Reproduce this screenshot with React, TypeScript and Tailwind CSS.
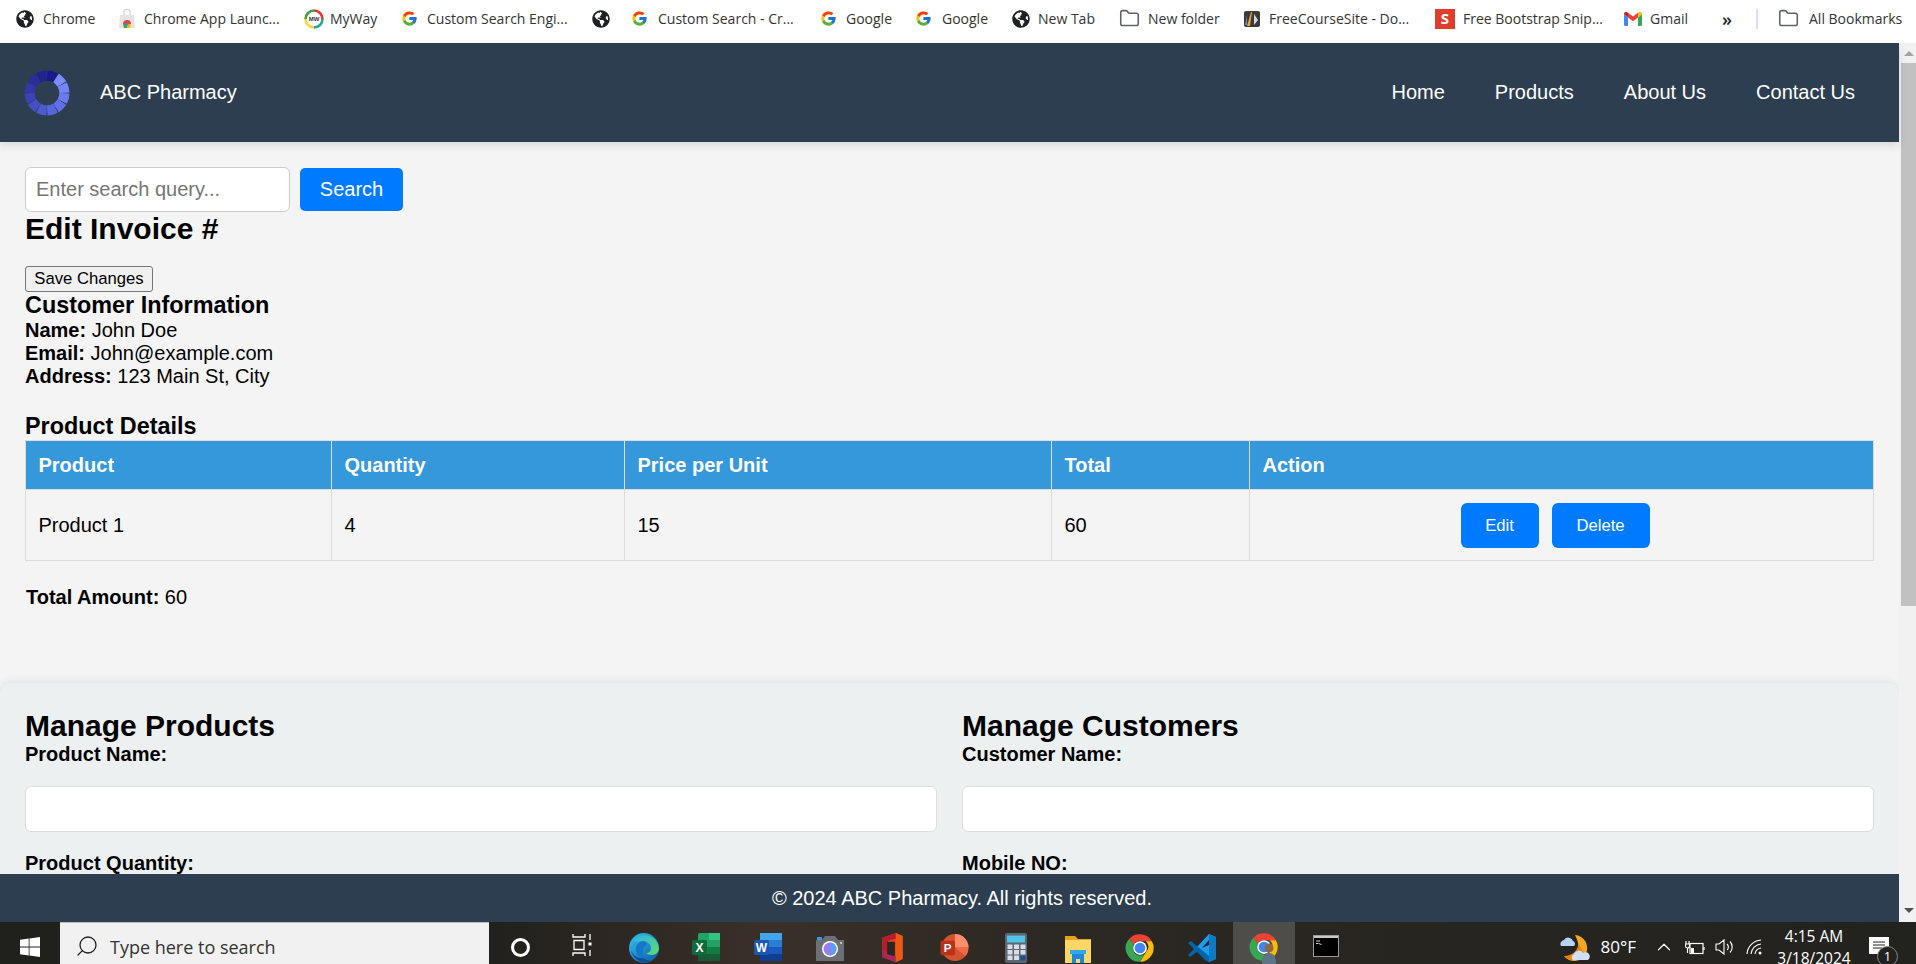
import { ChevronUp, Folder, Search } from "lucide-react";
import { FaGlobeAmericas } from "react-icons/fa";
import { FcGoogle } from "react-icons/fc";

function Globe() {
  return <FaGlobeAmericas size={18} className="text-[#202124] shrink-0" />;
}

function Google() {
  return <FcGoogle size={17} className="shrink-0" />;
}

function FolderIcon() {
  return <Folder size={21} strokeWidth={1.8} className="text-[#5f6368] shrink-0" />;
}

function ChromeLogo({ size = 30 }: { size?: number }) {
  return (
    <svg width={size} height={size} viewBox="0 0 48 48" className="shrink-0">
      <path d="M24 2a22 22 0 0 1 19 11H24a11 11 0 0 0-10 6L7 9A22 22 0 0 1 24 2z" fill="#ea4335" />
      <path d="M43 13a22 22 0 0 1-19 33l10-16a11 11 0 0 0-1-17z" fill="#fbbc04" />
      <path d="M24 46A22 22 0 0 1 7 9l7 10a11 11 0 0 0 20 11z" fill="#34a853" />
      <circle cx="24" cy="24" r="11" fill="#fff" />
      <circle cx="24" cy="24" r="8.5" fill="#4285f4" />
    </svg>
  );
}

function AppLauncher() {
  return (
    <svg width="18" height="20" viewBox="0 0 18 20" className="shrink-0">
      <path d="M2 6h14l1 13H1z" fill="#e4e4e4" />
      <path d="M6 6V3a3 3 0 0 1 6 0v3" fill="none" stroke="#cfcfcf" strokeWidth="1.3" />
      <path d="M5 15a4 4 0 0 1 8 0z" fill="#ea4335" />
      <path d="M5 15h4v4H6z" fill="#34a853" />
      <path d="M9 15h4l-1 4H9z" fill="#fbbc04" />
      <circle cx="9" cy="15" r="1.6" fill="#4285f4" />
    </svg>
  );
}

function MyWay() {
  return (
    <svg width="20" height="20" viewBox="0 0 20 20" className="shrink-0">
      <path d="M10 1.500a8.500 8.500 0 0 1 8.500 8.500" fill="none" stroke="#e53935" strokeWidth="2.600" />
      <path d="M18.500 10A8.500 8.500 0 0 1 10 18.500" fill="none" stroke="#26a69a" strokeWidth="2.600" />
      <path d="M10 18.500A8.500 8.500 0 0 1 1.500 10" fill="none" stroke="#fdd835" strokeWidth="2.600" />
      <path d="M1.500 10A8.500 8.500 0 0 1 10 1.500" fill="none" stroke="#43a047" strokeWidth="2.600" />
      <text x="10" y="12" textAnchor="middle" fontSize="6" fontWeight="700" fontFamily="Liberation Sans" fill="#333">MW</text>
    </svg>
  );
}

function CourseSite() {
  return (
    <svg width="18" height="18" viewBox="0 0 18 18" className="shrink-0">
      <rect x="1" y="1" width="16" height="16" rx="2" fill="#3a3a3a" />
      <path d="M8 2 4 16h3l2-14z" fill="#e6a23c" />
      <path d="M4 5 2 15h2z" fill="#5b8fd9" />
      <path d="M11 4l4 6-4 5z" fill="#d8d8d8" />
    </svg>
  );
}

function Snippets() {
  return (
    <div className="w-5 h-5 bg-[#e03e2d] flex items-center justify-center text-white text-[15px] font-bold font-['Open_Sans',sans-serif] shrink-0">
      S
    </div>
  );
}

function Gmail() {
  return (
    <svg width="18" height="14" viewBox="0 0 18 14" className="shrink-0">
      <path d="M0 2v10.500A1.500 1.500 0 0 0 1.500 14H4V5.500z" fill="#4285f4" />
      <path d="M14 5.500V14h2.500a1.500 1.500 0 0 0 1.500-1.500V2z" fill="#34a853" />
      <path d="M4 5.500V0.800L9 4.500l5-3.700v4.700L9 9.300z" fill="#ea4335" />
      <path d="M0 2l4 3.500V0.800L2.500 0C1 -.3 0 .8 0 2z" fill="#c5221f" />
      <path d="M14 0.800v4.700L18 2c0-1.200-1-2.300-2.500-2z" fill="#fbbc04" />
    </svg>
  );
}

const bookmarks = [
  { label: "Chrome", icon: <Globe />, width: "w-[102px]", gap: "gap-[9px]" },
  { label: "Chrome App Launc...", icon: <AppLauncher />, width: "w-[186px]", gap: "gap-[8px]" },
  { label: "MyWay", icon: <MyWay />, width: "w-[97px]", gap: "gap-[6px]" },
  { label: "Custom Search Engi...", icon: <Google />, width: "w-[191px]", gap: "gap-[9px]" },
  { label: "", icon: <Globe />, width: "w-[39px]", gap: "gap-[8px]" },
  { label: "Custom Search - Cr...", icon: <Google />, width: "w-[189px]", gap: "gap-[10px]" },
  { label: "Google", icon: <Google />, width: "w-[95px]", gap: "gap-[9px]" },
  { label: "Google", icon: <Google />, width: "w-[97px]", gap: "gap-[10px]" },
  { label: "New Tab", icon: <Globe />, width: "w-[107px]", gap: "gap-[8px]" },
  { label: "New folder", icon: <FolderIcon />, width: "w-[124px]", gap: "gap-[8px]" },
  { label: "FreeCourseSite - Do...", icon: <CourseSite />, width: "w-[192px]", gap: "gap-[8px]" },
  { label: "Free Bootstrap Snip...", icon: <Snippets />, width: "w-[189px]", gap: "gap-[8px]" },
  { label: "Gmail", icon: <Gmail />, width: "w-[94px]", gap: "gap-[8px]" },
];

function BookmarksBar() {
  return (
    <div className="h-[43px] bg-white flex items-center pl-[16px] pb-[6px] text-[14px] text-[#333] font-['Open_Sans',sans-serif] whitespace-nowrap">
      {bookmarks.map((b, i) => (
        <div key={i} className={`${b.width} ${b.gap} flex items-center shrink-0`}>
          {b.icon}
          {b.label && <span>{b.label}</span>}
        </div>
      ))}
      <span className="w-[38px] pl-[4px] text-[18px] font-semibold text-[#202124] leading-none">»</span>
      <div className="w-[2px] h-[20px] bg-[#e6d8fb] mr-[20px]" />
      <div className="flex items-center gap-[10px]">
        <FolderIcon />
        <span>All Bookmarks</span>
      </div>
    </div>
  );
}

const ringColors = [
  "#1b1a8a", "#7c8dff", "#7385fa", "#6a7af0", "#6170e6", "#5866dc",
  "#4f5ad0", "#474fc4", "#3d43b4", "#3338a6", "#2b2e9a", "#232390",
];

function Spinner() {
  return (
    <svg width="46" height="46" viewBox="-23 -23 46 46">
      {ringColors.map((color, i) => (
        <path
          key={i}
          d="M-4.700 -21.500Q0 -22.500 4.700 -21.500L2.800 -12.500Q0 -13 -2.800 -12.500Z"
          fill={color}
          stroke={color}
          strokeWidth="1"
          strokeLinejoin="round"
          transform={`rotate(${15 + i * 30})`}
        />
      ))}
    </svg>
  );
}

function Navbar() {
  return (
    <nav className="relative z-10 h-[99px] shrink-0 bg-[#2c3e50] text-white flex items-center pl-[24px] pr-[44px] shadow-[0_4px_8px_rgba(0,0,0,0.1)]">
      <Spinner />
      <span className="ml-[30px]">ABC Pharmacy</span>
      <ul className="ml-auto flex gap-[50px]">
        <li>Home</li>
        <li>Products</li>
        <li>About Us</li>
        <li>Contact Us</li>
      </ul>
    </nav>
  );
}

const cell = "border border-[#ddd] px-[12.5px]";

function InvoiceTable() {
  return (
    <table className="w-[1848px] table-fixed border-collapse">
      <colgroup>
        <col className="w-[306px]" />
        <col className="w-[293px]" />
        <col className="w-[427px]" />
        <col className="w-[198px]" />
        <col className="w-[624px]" />
      </colgroup>
      <thead>
        <tr className="h-[49px] bg-[#3498db] text-white text-left">
          <th className={cell}>Product</th>
          <th className={cell}>Quantity</th>
          <th className={cell}>Price per Unit</th>
          <th className={cell}>Total</th>
          <th className={cell}>Action</th>
        </tr>
      </thead>
      <tbody>
        <tr className="h-[71px]">
          <td className={cell}>Product 1</td>
          <td className={cell}>4</td>
          <td className={cell}>15</td>
          <td className={cell}>60</td>
          <td className={`${cell} text-center`}>
            <button className="w-[78px] h-[45px] mr-[13px] bg-[#007bff] text-white text-[16.67px] rounded-[6px]">Edit</button>
            <button className="w-[98px] h-[45px] mr-[13px] bg-[#007bff] text-white text-[16.67px] rounded-[6px]">Delete</button>
          </td>
        </tr>
      </tbody>
    </table>
  );
}

function Field({ label }: { label: string }) {
  return (
    <div>
      <label className="block font-bold">{label}</label>
      <input className="block w-full h-[46px] mt-[20px] mb-[20px] bg-white border border-[#ddd] rounded-[6px]" />
    </div>
  );
}

function Content() {
  return (
    <main className="flex-1 min-h-0 overflow-hidden">
      <div className="px-[25px] pt-[25px]">
        <div className="flex items-center">
          <input
            placeholder="Enter search query..."
            className="w-[265px] h-[45px] px-[10px] bg-white border border-[#ccc] rounded-[6px] placeholder:text-[#757575]"
          />
          <button className="w-[103px] h-[43px] ml-[10px] bg-[#007bff] text-white rounded-[5px]">Search</button>
        </div>
        <h2 className="text-[30px] leading-[34px] font-bold">Edit Invoice #</h2>
        <button className="block w-[128px] h-[26px] mt-[20px] bg-[#f0f0f0] border border-[#767676] rounded-[3px] text-[16.67px] leading-none">
          Save Changes
        </button>
        <h3 className="text-[23.4px] leading-[27px] font-bold">Customer Information</h3>
        <p><strong>Name:</strong> John Doe</p>
        <p><strong>Email:</strong> John@example.com</p>
        <p><strong>Address:</strong> 123 Main St, City</p>
        <h3 className="mt-[25px] text-[23.4px] leading-[27px] font-bold">Product Details</h3>
        <InvoiceTable />
        <p className="mt-[25px] ml-px"><strong>Total Amount:</strong> 60</p>
      </div>
      <section className="mt-[74px] px-[25px] pt-[25px] bg-[#ecf0f1] rounded-[10px] shadow-[0_0_10px_rgba(0,0,0,0.1)] grid grid-cols-2 gap-x-[25px]">
        <div>
          <h2 className="text-[30px] leading-[35px] font-bold">Manage Products</h2>
          <Field label="Product Name:" />
          <Field label="Product Quantity:" />
        </div>
        <div>
          <h2 className="text-[30px] leading-[35px] font-bold">Manage Customers</h2>
          <Field label="Customer Name:" />
          <Field label="Mobile NO:" />
        </div>
      </section>
    </main>
  );
}

function Scrollbar() {
  return (
    <div className="w-[17px] shrink-0 bg-[#f1f1f1] flex flex-col items-end">
      <div className="h-[20px] w-[15px] flex items-center justify-center">
        <div className="w-0 h-0 border-x-[5px] border-x-transparent border-b-[5px] border-b-[#a3a3a3]" />
      </div>
      <div className="h-[543px] w-[15px] bg-[#c1c1c1]" />
      <div className="flex-1" />
      <div className="h-[24px] w-[15px] flex items-center justify-center">
        <div className="w-0 h-0 border-x-[5px] border-x-transparent border-t-[5px] border-t-[#505050]" />
      </div>
    </div>
  );
}

function WinLogo() {
  return (
    <svg width="20" height="20" viewBox="0 0 20 20">
      <path d="M0 2.800 8.700 1.500v8H0zM9.500 1.400 20 0v9.500H9.500zM0 10.400h8.700v8.100L0 17.200zM9.500 10.400H20V20L9.500 18.600z" fill="#fff" />
    </svg>
  );
}

function TaskView() {
  return (
    <svg width="20" height="24" viewBox="0 0 20 24" fill="none" stroke="#fff" strokeWidth="1.300">
      <path d="M1 1v3h12V1M2 7.500h10v9H2zM1 23v-3h12v3M18 1v6M18 17v6" />
      <rect x="16.500" y="9.500" width="3" height="3" fill="#fff" stroke="none" />
    </svg>
  );
}

function Edge() {
  return (
    <svg width="30" height="30" viewBox="0 0 30 30">
      <defs>
        <linearGradient id="edgeA" x1="0" y1="0" x2="1" y2="1">
          <stop offset="0" stopColor="#35c1f1" />
          <stop offset="1" stopColor="#0c59a4" />
        </linearGradient>
        <linearGradient id="edgeB" x1="0" y1="0" x2="1" y2="1">
          <stop offset="0" stopColor="#2fb5e8" />
          <stop offset="1" stopColor="#5fdc6c" />
        </linearGradient>
      </defs>
      <circle cx="15" cy="15" r="15" fill="url(#edgeA)" />
      <path d="M5 7A14.500 14.500 0 0 1 30 15c0 4-3 7-7 7-3 0-5-1-6-2 3 0 5-2 5-5 0-4-4-7-8-7-4 0-7 2-9-1z" fill="url(#edgeB)" />
      <path d="M14 8c-5 1-8 5-7 10s6 11 14 10c-4-2-8-6-7-11 .5-3 2-4 4-5-1-3-2-4-4-4z" fill="#1478c8" />
      <path d="M13 29c-5-1-10-6-11-12 2 6 8 9 12 8 3 2 6 3 9 2-3 2-7 3-10 2z" fill="#0b4f96" />
    </svg>
  );
}

function Excel() {
  return (
    <svg width="30" height="28" viewBox="0 0 30 28">
      <rect x="7" y="0" width="22" height="28" rx="1.500" fill="#21a366" />
      <rect x="18" y="0" width="11" height="7" fill="#33c481" />
      <rect x="18" y="14" width="11" height="7" fill="#107c41" />
      <rect x="7" y="14" width="11" height="7" fill="#185c37" opacity="0.600" />
      <rect x="7" y="21" width="22" height="7" fill="#185c37" />
      <rect x="1" y="7" width="15" height="15" rx="1.500" fill="#0f6b3a" />
      <text x="8.500" y="19" textAnchor="middle" fontSize="12" fontWeight="700" fontFamily="Liberation Sans" fill="#fff">X</text>
    </svg>
  );
}

function Word() {
  return (
    <svg width="30" height="28" viewBox="0 0 30 28">
      <rect x="7" y="0" width="22" height="28" rx="1.500" fill="#2b7cd3" />
      <rect x="7" y="0" width="22" height="7" fill="#41a5ee" />
      <rect x="7" y="14" width="22" height="7" fill="#185abd" />
      <rect x="7" y="21" width="22" height="7" fill="#103f91" />
      <rect x="1" y="7" width="15" height="15" rx="1.500" fill="#1a56b8" />
      <text x="8.500" y="19" textAnchor="middle" fontSize="12" fontWeight="700" fontFamily="Liberation Sans" fill="#fff">W</text>
    </svg>
  );
}

function Camera() {
  return (
    <svg width="30" height="25" viewBox="0 0 30 25" className="mt-[3px]">
      <path d="M1 4h6l3-4h10l3 4h6v21H1z" fill="#6c7076" />
      <rect x="2" y="1" width="5" height="3" fill="#2f9be0" />
      <circle cx="15" cy="13" r="8" fill="#fff" />
      <circle cx="15" cy="13" r="6.500" fill="#9a7cf0" />
      <path d="M15 6.500a6.500 6.500 0 0 1 0 13z" fill="#5f9bf0" />
      <circle cx="26" cy="7" r="1" fill="#d8d8d8" />
    </svg>
  );
}

function Office() {
  return (
    <svg width="24" height="29" viewBox="0 0 24 30">
      <path d="M16 0 2 5v20l14 5 7-3V3z" fill="#e64a19" />
      <path d="M16 0 2 5v20l6-3V8l8-2z" fill="#b71c2c" />
      <path d="M2 18v7l14 5v-6z" fill="#a8285c" />
      <path d="M7 9h8v15l-8-2z" fill="#2a2622" />
      <path d="M16 0l7 3v24l-7 3z" fill="#ea5a14" />
    </svg>
  );
}

function PowerPoint() {
  return (
    <svg width="30" height="29" viewBox="0 0 30 30">
      <circle cx="16" cy="15" r="14" fill="#d35230" />
      <path d="M16 1a14 14 0 0 1 14 14H16z" fill="#ff8f6b" />
      <path d="M16 15h14a14 14 0 0 1-3 9z" fill="#ed6c47" />
      <rect x="1" y="8" width="15" height="15" rx="1.500" fill="#b7341a" />
      <text x="8.500" y="20" textAnchor="middle" fontSize="12" fontWeight="700" fontFamily="Liberation Sans" fill="#fff">P</text>
    </svg>
  );
}

function Calculator() {
  const keys = [
    [5, 12], [11.500, 12], [18, 12],
    [5, 17.500], [11.500, 17.500], [18, 17.500],
    [5, 23], [11.500, 23],
  ];
  return (
    <svg width="24" height="30" viewBox="0 0 24 30">
      <rect x="1" y="0" width="22" height="30" rx="2" fill="#5c6670" />
      <rect x="3" y="2.500" width="18" height="7" fill="#4fc3e8" />
      {keys.map(([x, y], i) => (
        <rect key={i} x={x - 1.500} y={y - 0.500} width="5" height="4.500" fill="#d8dfe4" />
      ))}
      <rect x="16.500" y="23" width="5" height="4.500" fill="#1d4f91" />
    </svg>
  );
}

function Explorer() {
  return (
    <svg width="30" height="30" viewBox="0 0 30 30">
      <path d="M2 3h10l3 3h13v24H2z" fill="#e8a317" />
      <rect x="2" y="7" width="26" height="23" fill="#fcd666" />
      <path d="M9 30v-9h12v9h-4v-4h-4v4z" fill="#1e88d8" />
      <rect x="7" y="17" width="16" height="4" fill="#35a5ec" />
    </svg>
  );
}

function VSCode() {
  return (
    <svg width="30" height="30" viewBox="0 0 30 30">
      <path d="M22 1 29 4v22l-7 3L8 16z" fill="#1f9cf0" />
      <path d="M22 1v28l7-3V4z" fill="#0a7cc4" />
      <path d="M1 10l3-2 18 15v6l-4-2-8-8-7 5-2-2 6-6z" fill="#0065a9" />
      <path d="M22 7v5l-7 3z" fill="#2a2622" />
    </svg>
  );
}

function Terminal() {
  return (
    <svg width="26" height="22" viewBox="0 0 26 22" className="mt-[2px]">
      <rect x="0.500" y="0.500" width="25" height="21" fill="#000" stroke="#9a9a9a" />
      <rect x="1" y="1" width="24" height="2" fill="#c8c8c8" />
      <path d="M3 6h4M3 8.500h2M5.500 8.500l3 1" stroke="#d8d8d8" strokeWidth="1" />
    </svg>
  );
}

function ActiveChrome() {
  return (
    <div className="relative">
      <ChromeLogo />
      <svg width="16" height="22" viewBox="0 0 16 22" className="absolute left-[12px] top-[10px]">
        <circle cx="8" cy="6" r="4.500" fill="#8a6a4a" />
        <path d="M1 22c0-8 3-11 7-11s7 3 7 11z" fill="#5d7488" />
      </svg>
    </div>
  );
}

const taskIcons = [
  <div key="ring" className="w-[19px] h-[19px] mt-[5px] rounded-full border-[3px] border-white" />,
  <TaskView key="view" />,
  <Edge key="edge" />,
  <Excel key="excel" />,
  <Word key="word" />,
  <Camera key="camera" />,
  <Office key="office" />,
  <PowerPoint key="ppt" />,
  <Calculator key="calc" />,
  <Explorer key="explorer" />,
  <ChromeLogo key="chrome" />,
  <VSCode key="vscode" />,
];

function Weather() {
  return (
    <svg width="32" height="30" viewBox="0 0 32 30">
      <path d="M17 3a13 13 0 1 1-11 21c8 1 16-5 14-13-.5-3-2-6-3-8z" fill="#f5a623" />
      <path d="M20 11c1 7-6 13-14 13 2 3 6 4 9 4 5 0 9-2 11-6-2-4-4-8-6-11z" fill="#e8820c" />
      <path d="M3 14a4 4 0 0 1 3-6 5 5 0 0 1 9 1 3 3 0 0 1 1 5z" fill="#b8d2f5" />
      <path d="M15 28a3.500 3.500 0 0 1 1-6 5 5 0 0 1 9-1 3.500 3.500 0 0 1 5 7z" fill="#cfe0f8" />
    </svg>
  );
}

function Taskbar() {
  return (
    <div className="relative h-[42px] shrink-0 flex overflow-hidden text-white font-['Open_Sans',sans-serif] bg-[linear-gradient(90deg,#20201c_0%,#20201c_25%,#3a3029_40%,#2c2823_55%,#22221e_100%)]">
      <div className="w-[60px] shrink-0 flex justify-center pt-[15px]">
        <WinLogo />
      </div>
      <div className="w-[429px] shrink-0 bg-[#f1f1f1] border-t border-[#bdbdbd] flex items-start pt-[11px] pl-[15px] text-[#333]">
        <Search size={24} strokeWidth={1.300} className="-scale-x-100 text-[#222] shrink-0" />
        <span className="ml-[11px] mt-px text-[18px] leading-[24px]">Type here to search</span>
      </div>
      {taskIcons.map((icon, i) => (
        <div key={i} className="w-[62px] shrink-0 flex justify-center items-start pt-[11px]">
          {icon}
        </div>
      ))}
      <div className="w-[62px] shrink-0 flex justify-center items-start pt-[10px] bg-[#4f4d4a]">
        <ActiveChrome />
      </div>
      <div className="w-[61px] shrink-0 flex justify-center items-start pt-[11px]">
        <Terminal />
      </div>
      <div className="ml-auto flex items-start pt-[10px] pr-[25px]">
        <Weather />
        <span className="ml-[11px] mt-[3px] text-[17px] leading-[24px]">80°F</span>
        <ChevronUp size={22} strokeWidth={1.300} className="ml-[17px] mt-[4px]" />
        <svg width="20" height="16" viewBox="0 0 20 16" fill="none" stroke="#fff" strokeWidth="1.200" className="ml-[10px] mt-[8px]">
          <rect x="5" y="3.500" width="13" height="10" />
          <rect x="6" y="8" width="3" height="5" fill="#fff" stroke="none" />
          <path d="M19 7v3M1 1v3M4 1v3M0.500 4h4v2a2 2 0 0 1-4 0zM2.500 8v5" />
        </svg>
        <svg width="20" height="18" viewBox="0 0 20 18" fill="none" stroke="#fff" strokeWidth="1.100" className="ml-[10px] mt-[6px]">
          <path d="M1 6h3l5-4v14l-5-4H1zM12 6a4 4 0 0 1 0 6M15 3.500a8 8 0 0 1 0 11" />
        </svg>
        <svg width="20" height="18" viewBox="0 0 20 18" fill="none" stroke="#fff" strokeWidth="1.100" className="ml-[11px] mt-[6px]">
          <path d="M1 16A15 15 0 0 1 15 2M5 16A11 11 0 0 1 15 6M9 16a7 7 0 0 1 6-6" />
          <circle cx="14" cy="15" r="1.500" fill="#fff" stroke="none" />
        </svg>
        <div className="w-[80px] ml-[8px] -mt-[7px] text-center text-[15.5px] leading-[22px] whitespace-nowrap">
          <div>4:15 AM</div>
          <div>3/18/2024</div>
        </div>
        <div className="relative w-[24px] ml-[13px] mt-[5px]">
          <svg width="20" height="17" viewBox="0 0 20 17" className="ml-[2px]">
            <path d="M0 0h20v17H0z" fill="#fff" />
            <path d="M4 5h12M4 8h12M4 11h9" stroke="#222" strokeWidth="1" />
          </svg>
          <div className="absolute left-[10px] top-[9px] w-[21px] h-[21px] rounded-full border border-[#888] bg-[#22221e] flex items-center justify-center text-[13px]">
            1
          </div>
        </div>
      </div>
    </div>
  );
}

export default function App() {
  return (
    <div className="h-screen flex flex-col overflow-hidden bg-[#f4f4f4] text-black text-[20px] leading-[23px] font-['Liberation_Sans',Arial,sans-serif]">
      <BookmarksBar />
      <div className="flex flex-1 min-h-0">
        <div className="flex-1 min-w-0 flex flex-col">
          <Navbar />
          <Content />
          <footer className="relative z-10 h-[48px] shrink-0 bg-[#2c3e50] text-white flex items-center justify-center pl-[25px]">
            © 2024 ABC Pharmacy. All rights reserved.
          </footer>
        </div>
        <Scrollbar />
      </div>
      <Taskbar />
    </div>
  );
}
